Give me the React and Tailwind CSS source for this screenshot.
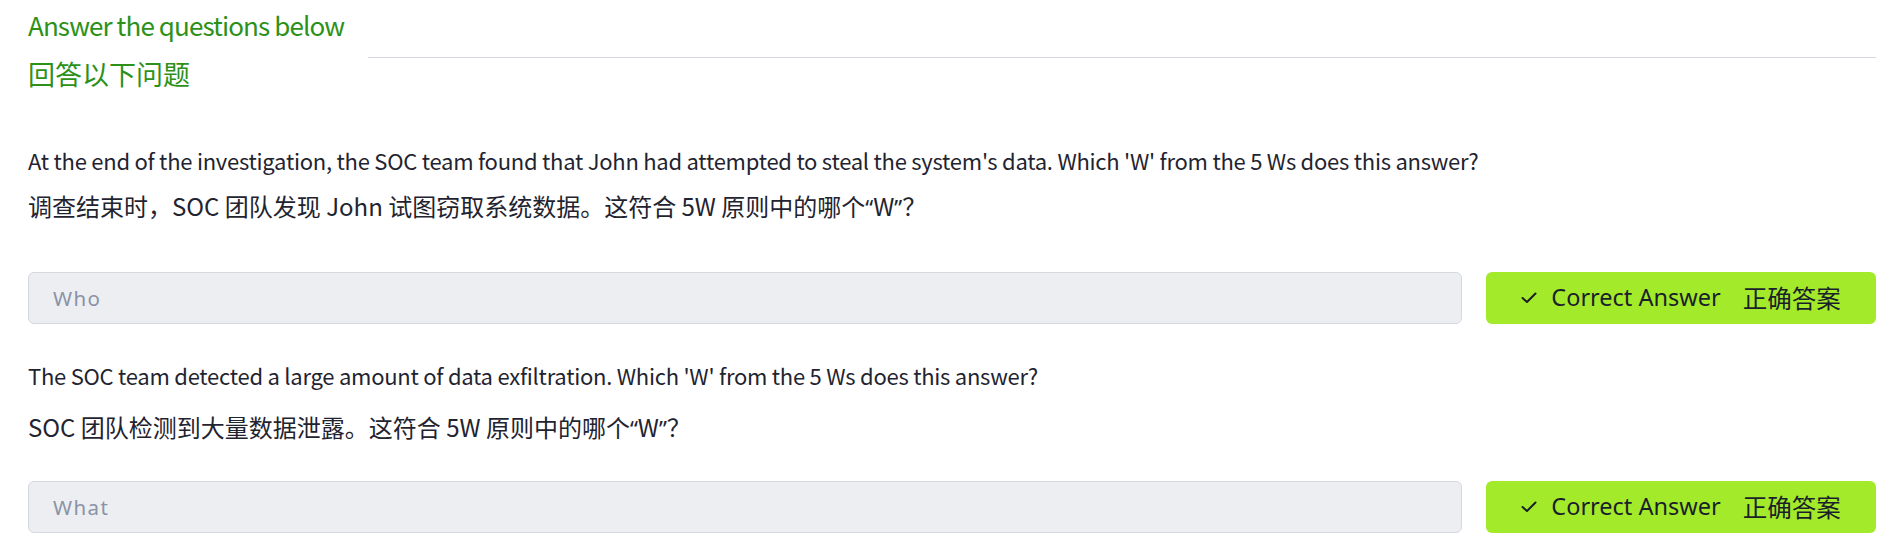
import React from "react";

const cjk = { fontFamily: '"Noto Sans CJK SC", "Noto Sans", sans-serif' };
const ui = { fontFamily: '"Noto Sans", "Noto Sans CJK SC", sans-serif' };
const latin = { fontFamily: '"Noto Sans", sans-serif' };

function Check() {
  return (
    <svg width="16" height="12" viewBox="0 0 16 12" className="shrink-0">
      <polyline points="1.5,6 6,10 14.5,1.5" fill="none" stroke="#1b1f2a" strokeWidth="2" strokeLinecap="round" strokeLinejoin="round" />
    </svg>
  );
}

function Q({ children }) {
  return <span style={latin} className="text-[22px] leading-[0px]">{children}</span>;
}

function AnswerRow({ answer, className }) {
  return (
    <div className={"flex gap-[24px] " + className}>
      <div className="flex-1 h-[52px] rounded-[6px] bg-[#eceef2] border border-[#d4d8df] flex items-center pl-[24px]">
        <span className="text-[20.5px] tracking-[1.4px] text-[#8a93a6]" style={ui}>{answer}</span>
      </div>
      <div className="w-[390px] h-[52px] rounded-[6px] bg-[#a3eb2a] flex items-center justify-center text-[#1b1f2a]">
        <Check />
        <span className="ml-[14px] text-[23.5px]" style={ui}>Correct Answer</span>
        <span className="ml-[22px] text-[24.5px]" style={cjk}>正确答案</span>
      </div>
    </div>
  );
}

export default function App() {
  return (
    <div className="w-full min-h-[559px] bg-white pl-[28px] pr-[21px] pt-[9px]" style={cjk}>
      <div className="text-[26px] leading-[32px] tracking-[-0.9px] text-[#2d9119]">Answer the questions below</div>
      <div className="ml-[340px] mt-[16px] border-t border-[#d5d8dd]" />
      <div className="text-[27px] leading-[32px] text-[#2d9119]">回答以下问题</div>

      <p className="mt-[54px] text-[22px] leading-[32px] tracking-[-0.25px] text-[#1f2430]">
        At the end of the investigation, the SOC team found that John had attempted to steal the system's data. Which 'W' from the 5 Ws does this answer?
      </p>
      <p className="mt-[14px] text-[24px] leading-[32px] text-[#1f2430]">
        调查结束时，SOC 团队发现 John 试图窃取系统数据。这符合 5W 原则中的哪个<Q>“</Q>W<Q>”</Q>？
      </p>
      <AnswerRow answer="Who" className="mt-[50px]" />

      <p className="mt-[35px] text-[22px] leading-[32px] tracking-[-0.25px] text-[#1f2430]">
        The SOC team detected a large amount of data exfiltration. Which 'W' from the 5 Ws does this answer?
      </p>
      <p className="mt-[20px] text-[24px] leading-[32px] text-[#1f2430]">
        SOC 团队检测到大量数据泄露。这符合 5W 原则中的哪个<Q>“</Q>W<Q>”</Q>？
      </p>
      <AnswerRow answer="What" className="mt-[38px]" />
    </div>
  );
}
